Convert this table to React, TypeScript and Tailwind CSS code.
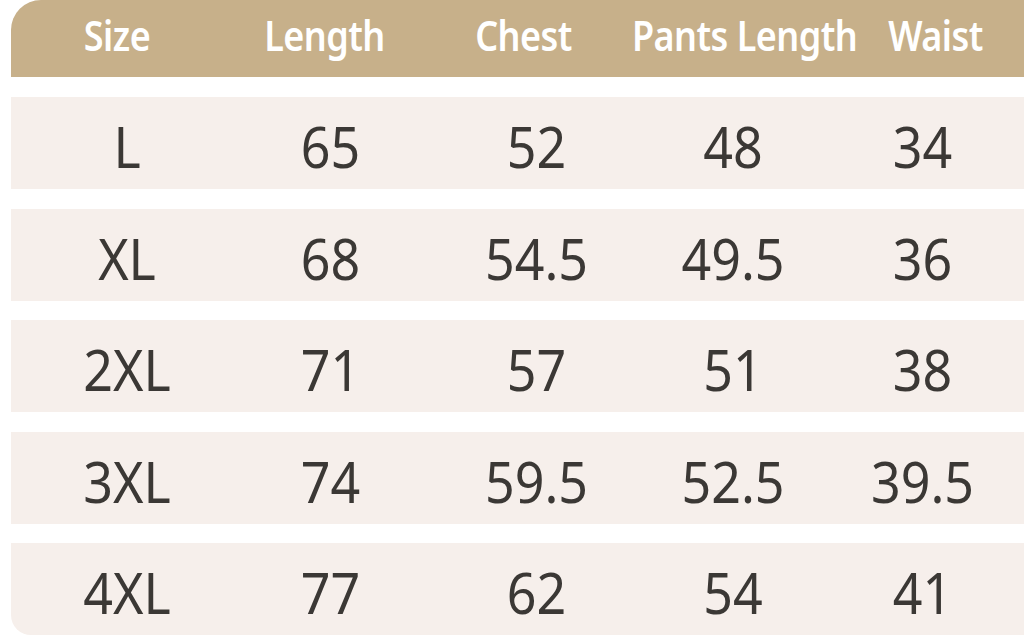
const headers = ["Size", "Length", "Chest", "Pants Length", "Waist"];

const rows = [
  ["L", "65", "52", "48", "34"],
  ["XL", "68", "54.5", "49.5", "36"],
  ["2XL", "71", "57", "51", "38"],
  ["3XL", "74", "59.5", "52.5", "39.5"],
  ["4XL", "77", "62", "54", "41"],
];

const cols = "grid grid-cols-[214px_205px_203px_204px_187px]";
// small nudges so text sits where the reference has it
const headShift = ["-translate-x-[1px]", "-translate-x-[3px]", "-translate-x-[8px]", "-translate-x-[1px]", "translate-x-[5px]"];
const cellShift = ["translate-x-[9px]", "translate-x-[3px]", "translate-x-[5px]", "-translate-x-[2px]", "-translate-x-[8px]"];

export default function App() {
  return (
    <div
      className="h-[640px] w-[1024px] overflow-hidden bg-white pl-[11px]"
      style={{ fontFamily: '"Noto Sans", "Open Sans", sans-serif' }}
    >
      <div className="flex w-[1013px] flex-col gap-[19.5px]">
        <div className={`${cols} mb-[0.5px] h-[77px] items-center rounded-tl-[30px] bg-[#c7b08a] pb-[6px]`}>
          {headers.map((h, j) => (
            <div key={h} className="whitespace-nowrap text-center text-[36px] font-semibold leading-none tracking-[-0.015em] text-white">
              <span className={`inline-block scale-y-[1.16] ${headShift[j]}`}>{h}</span>
            </div>
          ))}
        </div>
        {rows.map((r, i) => (
          <div
            key={r[0]}
            className={`${cols} h-[92px] items-center bg-[#f6efeb] ${i === rows.length - 1 ? "rounded-bl-[20px]" : ""}`}
          >
            {r.map((v, j) => (
              <div key={j} className="whitespace-nowrap pt-[6px] text-center text-[52px] leading-none text-[#3b3835]">
                <span className={`inline-block scale-y-[1.1] ${cellShift[j]}`}>{v}</span>
              </div>
            ))}
          </div>
        ))}
      </div>
    </div>
  );
}
